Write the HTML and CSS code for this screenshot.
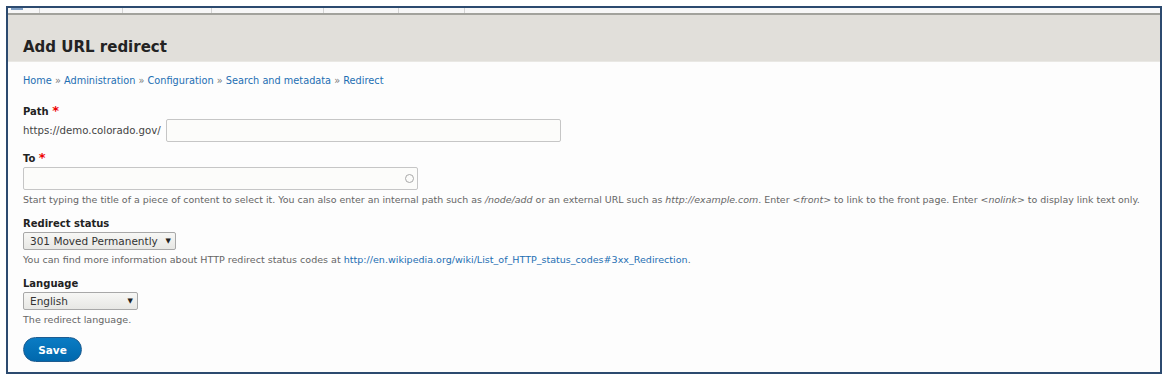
FILE: index.html
```html
<!DOCTYPE html>
<html lang="en">
<head>
  <meta charset="UTF-8" />
  <title>Add URL redirect</title>
  <link rel="stylesheet" href="styles.css">
</head>
<body>
  <div class="frame">
    <div class="toolbar">
      <span class="tb-icon"></span>
      <span class="tb-item w1"></span>
      <span class="tb-item w2"></span>
      <span class="tb-item w3"></span>
      <span class="tb-item w4"></span>
      <span class="tb-item w5"></span>
      <span class="tb-item w6"></span>
    </div>

    <div class="page-head">
      <h1>Add URL redirect</h1>
    </div>

    <div class="content">
      <nav class="breadcrumb">
        <a href="#">Home</a> » <a href="#">Administration</a> » <a href="#">Configuration</a> » <a href="#">Search and metadata</a> » <a href="#">Redirect</a>
      </nav>

      <form class="redirect-form">
        <div class="form-item">
          <label>Path <span class="req">*</span></label>
          <div class="path-row">
            <span class="prefix">https://demo.colorado.gov/</span>
            <input type="text" class="text path-input" />
          </div>
        </div>

        <div class="form-item">
          <label>To <span class="req">*</span></label>
          <div class="auto-wrap">
            <input type="text" class="text to-input" />
          </div>
          <div class="description">Start typing the title of a piece of content to select it. You can also enter an internal path such as <em>/node/add</em> or an external URL such as <em>http://example.com</em>. Enter <em>&lt;front&gt;</em> to link to the front page. Enter <em>&lt;nolink&gt;</em> to display link text only.</div>
        </div>

        <div class="form-item">
          <label>Redirect status</label>
          <div class="select-wrap status">
            <select><option>301 Moved Permanently</option></select>
          </div>
          <div class="description spaced">You can find more information about HTTP redirect status codes at <a href="#">http://en.wikipedia.org/wiki/List_of_HTTP_status_codes#3xx_Redirection</a>.</div>
        </div>

        <div class="form-item">
          <label>Language</label>
          <div class="select-wrap lang">
            <select><option>English</option></select>
          </div>
          <div class="description spaced">The redirect language.</div>
        </div>

        <button type="button" class="save">Save</button>
      </form>
    </div>
  </div>
</body>
</html>
```

FILE: styles.css
```css
body {
  margin: 0;
  background: #fff;
  font-family: "DejaVu Sans", sans-serif;
  color: #222;
}

.frame {
  margin: 6px 0 0 6px;
  width: 1152px;
  height: 364px;
  border: 2px solid #2c4a6f;
  overflow: hidden;
  background: #fdfdfd;
}

/* toolbar remnant at the top */
.toolbar {
  height: 5px;
  display: flex;
  background: #f7f7f7;
  border-bottom: 2px solid #a2a29c;
}

.tb-icon {
  width: 31px;
  position: relative;
}

.tb-icon::before {
  content: "";
  position: absolute;
  left: 3px;
  top: 0;
  width: 12px;
  height: 2px;
  background: #7d9dc2;
}

.tb-item {
  border-left: 1px solid #d4d4d4;
}

.w1 { width: 82px; }
.w2 { width: 88px; }
.w3 { width: 111px; }
.w4 { width: 74px; }
.w5 { width: 65px; }
.w6 { width: 0; }

.page-head {
  background: #e1dfda;
  height: 46px;
  border-bottom: 1px solid #e9e8e4;
  padding-left: 15px;
}

h1 {
  margin: 0;
  padding-top: 22px;
  font-family: "DejaVu Sans", sans-serif;
  font-size: 15px;
  font-weight: bold;
  color: #232323;
  line-height: 20px;
}

.content {
  padding: 12px 15px 0;
}

.breadcrumb {
  font-size: 9.75px;
  line-height: 14px;
  color: #7a7a7a;
  margin-bottom: 17px;
}

a {
  color: #1d6fb3;
  text-decoration: none;
}

.form-item {
  margin-bottom: 10px;
}

label {
  display: block;
  font-size: 10px;
  font-weight: bold;
  line-height: 14px;
  color: #222;
}

.req {
  color: #e00;
  font-size: 13px;
  line-height: 10px;
}

.path-row {
  display: flex;
  align-items: center;
  gap: 5px;
}

.prefix {
  font-size: 10.2px;
  color: #444;
}

input.text {
  box-sizing: border-box;
  height: 23px;
  border: 1px solid #c6c6c6;
  border-radius: 2px;
  background: #fcfcfa;
  margin: 0;
  display: block;
}

.path-input {
  width: 395px;
}

.auto-wrap {
  position: relative;
  width: 395px;
  margin-top: 1px;
}

.to-input {
  width: 395px;
  background: #f6f6f4;
}

.auto-wrap::after {
  content: "";
  position: absolute;
  right: 4px;
  top: 7px;
  width: 7px;
  height: 7px;
  border: 1px solid #a8a8a8;
  border-radius: 50%;
}

.description {
  font-size: 9.45px;
  line-height: 14px;
  color: #666;
  margin-top: 3px;
  white-space: nowrap;
}

.description.spaced {
  font-size: 9.55px;
}

.description em {
  font-style: italic;
}

.select-wrap {
  position: relative;
  box-sizing: border-box;
  height: 18px;
  margin-top: 1px;
  border: 1px solid #a8a8a8;
  border-radius: 2px;
  background: linear-gradient(#f7f7f5, #e7e7e4);
}

.select-wrap.status { width: 153px; }
.select-wrap.lang { width: 115px; }

.select-wrap select {
  appearance: none;
  -webkit-appearance: none;
  display: block;
  border: none;
  background: transparent;
  width: 100%;
  height: 16px;
  line-height: 16px;
  padding: 0 0 0 6px;
  font-family: "DejaVu Sans", sans-serif;
  font-size: 10.5px;
  color: #333;
  margin: 0;
}

.select-wrap::after {
  content: "▼";
  position: absolute;
  right: 4px;
  top: 3px;
  font-size: 7px;
  line-height: 10px;
  color: #222;
  pointer-events: none;
}

.save {
  display: block;
  margin-top: 10px;
  width: 59px;
  height: 25px;
  border: 1px solid #1e5c90;
  border-radius: 13px;
  background: linear-gradient(#0a7cc4, #0068ad);
  color: #fff;
  font-family: "DejaVu Sans", sans-serif;
  font-size: 10.5px;
  font-weight: bold;
  padding: 0;
}
```
